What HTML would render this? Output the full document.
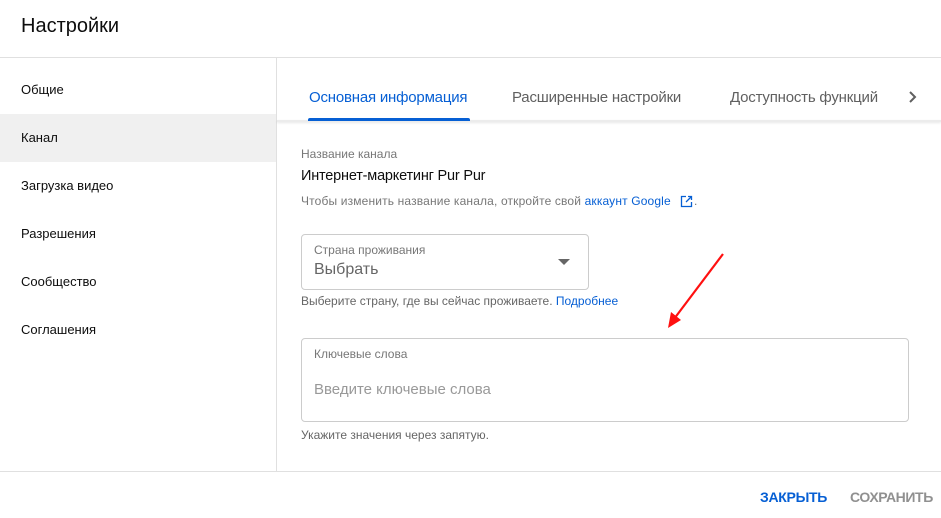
<!DOCTYPE html>
<html><head><meta charset="utf-8"><style>
*{margin:0;padding:0;box-sizing:border-box}
body{width:941px;height:518px;background:#fff;font-family:"Liberation Sans",Arial,sans-serif;position:relative;overflow:hidden;color:#0d0d0d}
.a{position:absolute;white-space:nowrap}
</style></head><body>
<div class="a" style="left:21px;top:15px;font-size:20px;color:#0d0d0d">Настройки</div>
<div class="a" style="left:0;top:57px;width:941px;height:1px;background:#e0e0e0"></div>
<div class="a" style="left:276px;top:58px;width:1px;height:413px;background:#e0e0e0"></div>
<div class="a" style="left:0;top:114px;width:276px;height:48px;background:#f0f0f0"></div>
<div class="a" style="left:21px;top:82px;font-size:13px">Общие</div>
<div class="a" style="left:21px;top:130px;font-size:13px">Канал</div>
<div class="a" style="left:21px;top:178px;font-size:13px">Загрузка видео</div>
<div class="a" style="left:21px;top:226px;font-size:13px">Разрешения</div>
<div class="a" style="left:21px;top:274px;font-size:13px">Сообщество</div>
<div class="a" style="left:21px;top:322px;font-size:13px">Соглашения</div>

<div class="a" style="left:277px;top:120px;width:664px;height:2px;background:#ececec;box-shadow:0 1px 2px rgba(0,0,0,.1)"></div>
<div class="a" style="left:309px;top:89px;font-size:15px;color:#065fd4;letter-spacing:-.2px">Основная информация</div>
<div class="a" style="left:308px;top:118px;width:162px;height:3px;background:#065fd4;border-radius:2px 2px 0 0"></div>
<div class="a" style="left:512px;top:89px;font-size:15px;color:#606060;letter-spacing:-.2px">Расширенные настройки</div>
<div class="a" style="left:730px;top:89px;font-size:15px;color:#606060;letter-spacing:-.2px">Доступность функций</div>
<svg class="a" style="left:905px;top:89px" width="16" height="16" viewBox="0 0 16 16"><path d="M5 3l5 5-5 5" fill="none" stroke="#606060" stroke-width="2"/></svg>

<div class="a" style="left:301px;top:147px;font-size:12px;color:#777">Название канала</div>
<div class="a" style="left:301px;top:168px;font-size:14.5px;color:#0d0d0d;letter-spacing:-.2px">Интернет-маркетинг Pur Pur</div>
<div class="a" style="left:301px;top:194px;font-size:12px;color:#777;letter-spacing:.15px">Чтобы изменить название канала, откройте свой <span style="color:#065fd4">аккаунт Google</span></div>
<svg class="a" style="left:680px;top:195px" width="13" height="13" viewBox="0 0 13 13"><path d="M6 1.5H1.5v10h10V7M8 1.5h3.5V5M11.5 1.5L6 7" fill="none" stroke="#065fd4" stroke-width="1.3"/></svg>
<div class="a" style="left:694px;top:194px;font-size:12px;color:#777">.</div>

<div class="a" style="left:301px;top:234px;width:288px;height:56px;border:1px solid #ccc;border-radius:4px"></div>
<div class="a" style="left:314px;top:243px;font-size:12px;color:#777">Страна проживания</div>
<div class="a" style="left:314px;top:261px;font-size:16px;color:#666">Выбрать</div>
<svg class="a" style="left:558px;top:259px" width="12" height="6"><path d="M0 0h12L6 6z" fill="#666"/></svg>
<div class="a" style="left:301px;top:294px;font-size:12px;color:#666;letter-spacing:0px">Выберите страну, где вы сейчас проживаете. <span style="color:#065fd4">Подробнее</span></div>

<svg class="a" style="left:660px;top:250px" width="70" height="80"><path d="M63 4L14 69" stroke="#ff1010" stroke-width="2.2" fill="none"/><path d="M8 78L11 62L21 70z" fill="#ff1010"/></svg>

<div class="a" style="left:301px;top:338px;width:608px;height:84px;border:1px solid #ccc;border-radius:4px"></div>
<div class="a" style="left:314px;top:347px;font-size:12px;color:#777">Ключевые слова</div>
<div class="a" style="left:314px;top:381px;font-size:15px;color:#999">Введите ключевые слова</div>
<div class="a" style="left:301px;top:428px;font-size:12px;color:#666;letter-spacing:0px">Укажите значения через запятую.</div>

<div class="a" style="left:0;top:471px;width:941px;height:1px;background:#e0e0e0"></div>
<div class="a" style="left:760px;top:489px;font-size:14px;color:#065fd4;font-weight:bold;letter-spacing:-.3px">ЗАКРЫТЬ</div>
<div class="a" style="left:850px;top:489px;font-size:14px;color:#909090;font-weight:bold;letter-spacing:-.4px">СОХРАНИТЬ</div>
</body></html>
